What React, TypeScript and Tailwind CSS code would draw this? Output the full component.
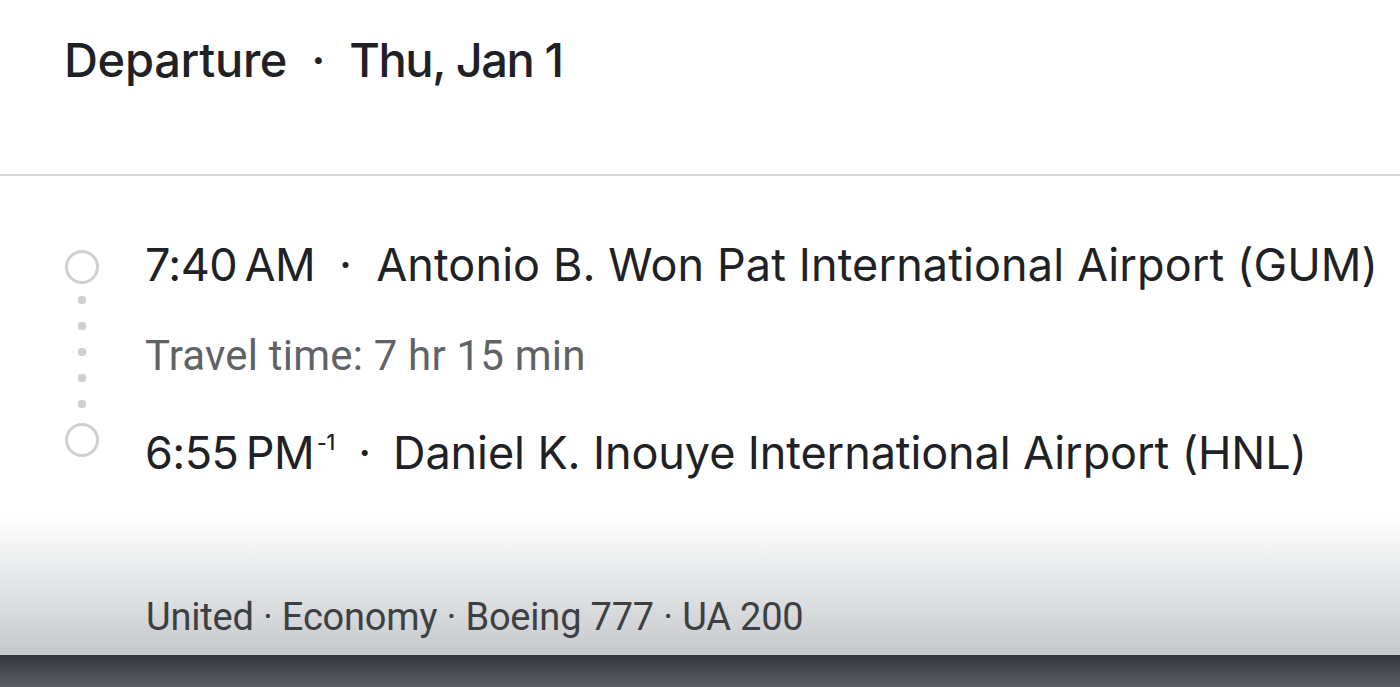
export default function App() {
  return (
    <div className="w-[1400px] h-[687px] overflow-hidden bg-white flex flex-col">
      {/* header */}
      <div className="h-[176px] shrink-0 pl-[64px] pt-[30px] border-b-2 border-[#d6d6d6]">
        <h1 className="text-[47px] leading-[60px] font-medium text-[#202124] font-['Inter',sans-serif] tracking-[-0.3px] whitespace-nowrap">
          Departure<span className="mx-[24px]">·</span><span className="tracking-[-1.4px]">Thu, Jan 1</span>
        </h1>
      </div>

      {/* itinerary */}
      <div className="flex pl-[65px] pt-[64px] gap-[46px]">
        <div className="flex flex-col items-center w-[34px] pt-[10px]">
          <div className="w-[34px] h-[34px] rounded-full border-[3px] border-[#cfcfcf]" />
          <div className="flex flex-col items-center gap-[18px] pt-[12px] pb-[15px]">
            <span className="w-[8px] h-[8px] rounded-[3px] bg-[#d0d0d0]" />
            <span className="w-[8px] h-[8px] rounded-[3px] bg-[#d0d0d0]" />
            <span className="w-[8px] h-[8px] rounded-[3px] bg-[#d0d0d0]" />
            <span className="w-[8px] h-[8px] rounded-[3px] bg-[#d0d0d0]" />
            <span className="w-[8px] h-[8px] rounded-[3px] bg-[#d0d0d0]" />
          </div>
          <div className="w-[34px] h-[34px] rounded-full border-[3px] border-[#cfcfcf]" />
        </div>
        <div className="flex flex-col font-['Inter',sans-serif] text-[#202124]">
          <p className="text-[45px] leading-[50px] tracking-[0.1px] whitespace-nowrap">
            <span className="tracking-[-0.6px]">7:40{'\u2009'}AM</span>
            <span className="mx-[24px]">·</span>Antonio B. Won Pat International Airport (GUM)
          </p>
          <p className="mt-[42px] text-[42px] leading-[48px] tracking-[0.2px] text-[#5f6368] font-['Roboto',sans-serif]">
            Travel time: 7 hr 15 min
          </p>
          <p className="mt-[48px] text-[45px] leading-[50px] tracking-[-0.1px] whitespace-nowrap">
            <span className="tracking-[-0.6px]">6:55{'\u2009'}PM</span>
            <sup className="text-[21px] font-medium relative -top-[19px] ml-[3px]">-1</sup>
            <span className="ml-[23px] mr-[22px]">·</span>Daniel K. Inouye International Airport (HNL)
          </p>
        </div>
      </div>

      {/* footer with overlay gradient */}
      <div className="mt-auto h-[172px] shrink-0 flex flex-col bg-gradient-to-b from-white via-[#dcdee0] to-[#b9bcc0]">
        <div className="flex-1 flex items-end pl-[146px] pb-[16px]">
          <p className="text-[38px] leading-[44px] text-[#3c4043] font-['Roboto',sans-serif] tracking-[-0.2px] whitespace-nowrap">
            United · Economy · Boeing 777 · UA 200
          </p>
        </div>
        <div className="h-[32px] bg-gradient-to-b from-[#33373c] to-[#5c6066]" />
      </div>
    </div>
  );
}
